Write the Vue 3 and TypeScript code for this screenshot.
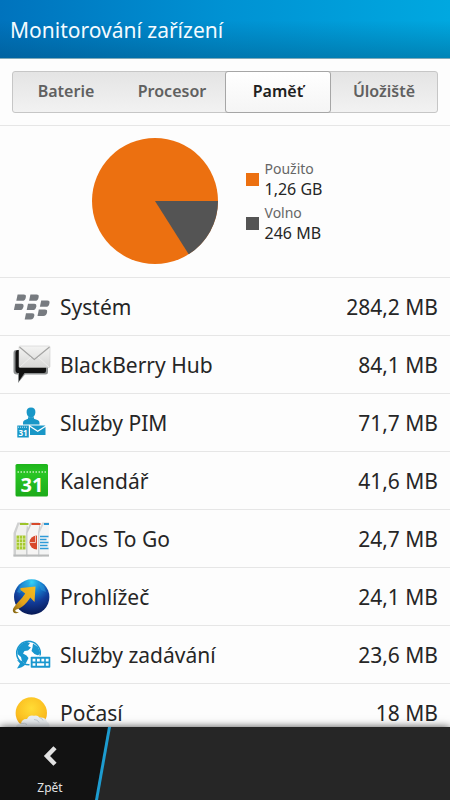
<script setup lang="ts">
import { computed, ref } from 'vue'

interface MemoryItem {
  icon: string
  name: string
  size: string
}

const tabs: string[] = ['Baterie', 'Procesor', 'Paměť', 'Úložiště']
const activeTab = ref<string>('Paměť')

const usedMb = 1290
const freeMb = 246

const items: MemoryItem[] = [
  { icon: 'system', name: 'Systém', size: '284,2 MB' },
  { icon: 'hub', name: 'BlackBerry Hub', size: '84,1 MB' },
  { icon: 'pim', name: 'Služby PIM', size: '71,7 MB' },
  { icon: 'calendar', name: 'Kalendář', size: '41,6 MB' },
  { icon: 'docs', name: 'Docs To Go', size: '24,7 MB' },
  { icon: 'browser', name: 'Prohlížeč', size: '24,1 MB' },
  { icon: 'input', name: 'Služby zadávání', size: '23,6 MB' },
  { icon: 'weather', name: 'Počasí', size: '18 MB' },
]

// Slice of free memory, drawn clockwise from three o'clock.
const freeSlice = computed<string>(() => {
  const angle = (freeMb / (usedMb + freeMb)) * Math.PI * 2
  const x = 63 + 63 * Math.cos(angle)
  const y = 63 + 63 * Math.sin(angle)
  return `M63 63H126A63 63 0 0 1 ${x.toFixed(2)} ${y.toFixed(2)}Z`
})
</script>

<template>
  <div class="screen">
    <header class="title-bar">
      <h1>Monitorování zařízení</h1>
    </header>

    <main class="content">
      <nav class="tab-area">
        <div class="tabs" role="tablist">
          <button
            v-for="tab in tabs"
            :key="tab"
            type="button"
            role="tab"
            class="tab"
            :class="{ active: tab === activeTab }"
            :aria-selected="tab === activeTab"
            @click="activeTab = tab"
          >{{ tab }}</button>
        </div>
      </nav>

      <section class="summary">
        <svg class="pie" viewBox="0 0 126 126" aria-hidden="true">
          <circle cx="63" cy="63" r="63" fill="#ec7010" />
          <path :d="freeSlice" fill="#545454" />
        </svg>
        <dl class="legend">
          <div class="entry used">
            <dt>Použito</dt>
            <dd>1,26 GB</dd>
          </div>
          <div class="entry free">
            <dt>Volno</dt>
            <dd>246 MB</dd>
          </div>
        </dl>
      </section>

      <ul class="list">
        <li v-for="item in items" :key="item.name" class="row">
          <svg class="icon" viewBox="0 0 40 40" aria-hidden="true">
            <g v-if="item.icon === 'system'" fill="#777b80">
              <path d="M5.600 7.500h6.200q2.400 0 2.100 2.400q-.5 3.900-3.800 3.900H4.300z" />
              <path d="M18.400 7.500h6.200q2.400 0 2.100 2.400q-.5 3.900-3.800 3.900H17.100z" />
              <path d="M3.200 16.800h6.200q2.400 0 2.100 2.400q-.5 3.900-3.800 3.900H1.900z" />
              <path d="M16 16.800h6.200q2.400 0 2.100 2.400q-.5 3.900-3.800 3.900H14.700z" />
              <path d="M29.200 13.500h6.200q2.400 0 2.100 2.400q-.5 3.900-3.800 3.900H27.900z" />
              <path d="M26.800 22.600h6.200q2.400 0 2.100 2.400q-.5 3.900-3.800 3.900H25.500z" />
              <path d="M14 26.200h6.200q2.400 0 2.100 2.400q-.5 3.900-3.800 3.900H12.700z" />
            </g>

            <g v-else-if="item.icon === 'hub'">
              <defs>
                <linearGradient id="hubPaper" x1="0" y1="0" x2="0" y2="1">
                  <stop offset="0" stop-color="#f4f4f3" />
                  <stop offset="1" stop-color="#d6d6d5" />
                </linearGradient>
              </defs>
              <path d="M4 5h30q2 0 2 2v20q0 2.500-2.500 2.500H13L6 38V29.500H5q-3.500 0-3.500-3V8q0-3 2.500-3z" fill="#8c8f90" />
              <path d="M6 5h26q2 0 2 2v19q0 2-2 2H12.500L7 36V28H5.500q-2-.5-2-2.500V8q0-3 2.500-3z" fill="#111" />
              <rect x="7" y="1" width="31" height="21.500" rx="1" fill="url(#hubPaper)" stroke="#c6c6c5" stroke-width=".5" />
              <path d="M7.500 2l14.800 12.500L37.500 2" fill="none" stroke="#a3a3a2" stroke-width="1.200" />
              <path d="M8 22l11-10M37 22L26 12" fill="none" stroke="#f3f3f2" stroke-width=".7" />
            </g>

            <g v-else-if="item.icon === 'pim'" fill="#1997c7">
              <path d="M19 4.500c3 0 4.600 1.900 4.400 4.800c-.2 3-1.900 5.500-4.400 5.500s-4.200-2.500-4.400-5.500c-.2-2.900 1.400-4.800 4.400-4.800z" />
              <path d="M16 14.200h6v1.500l4 1.500q1.500.8 1.500 2.500V21.500H11V19.700q0-1.700 1.500-2.500l3.500-1.500z" />
              <path d="M5.300 22.500H16.800V34.500H5.300z" />
              <path d="M6 24.200h10" stroke="#fff" stroke-width=".8" stroke-dasharray="1 1" />
              <text x="11" y="33" text-anchor="middle" class="tiny-date">31</text>
              <path d="M18 22.500H33.500L25.700 27.600z" />
              <path d="M18 24l7.700 5.100L33.500 24V32H18z" />
            </g>

            <g v-else-if="item.icon === 'calendar'">
              <defs>
                <linearGradient id="calGreen" x1="0" y1="0" x2="0" y2="1">
                  <stop offset="0" stop-color="#1db41b" />
                  <stop offset=".3" stop-color="#29c524" />
                  <stop offset="1" stop-color="#1cab1a" />
                </linearGradient>
              </defs>
              <rect x="3.500" y="3" width="32.500" height="32.500" rx="1.500" fill="url(#calGreen)" />
              <path d="M5.500 11h29" stroke="#c4f0bb" stroke-width="1.600" stroke-dasharray="1.500 1.500" />
              <text x="20" y="31" text-anchor="middle" class="big-date">31</text>
            </g>

            <g v-else-if="item.icon === 'docs'">
              <path d="M5.500 3.500H14L17.500 12V37.500H1.500V14z" fill="#cfd0d0" />
              <path d="M4 14L7 5.500h8L14 14V37.500H4z" fill="#f1f1ef" />
              <path d="M8 5h8.500" stroke="#9dc42b" stroke-width="2" />
              <path d="M4.500 16.500h9v14h-9z" fill="#a7c92f" />
              <path d="M4.500 20h9M4.500 23.500h9M4.500 27h9M7.500 16.500v14M10.500 16.500v14" stroke="#e8f1c4" stroke-width=".7" />
              <path d="M18 3.500h9L30 13V37.500H14.500V14z" fill="#c7c9ca" />
              <path d="M15.500 14L19.500 5.500H27.500L26 14V37.500H15.500z" fill="#f6f5f4" />
              <path d="M19.500 5h9" stroke="#d7492a" stroke-width="2" />
              <path d="M25 16.500v14A7.500 7 0 0 1 25 16.500z" fill="#d8482b" />
              <path d="M18 23.500h5.500V17" fill="none" stroke="#f6ded8" stroke-width=".8" />
              <path d="M30 3.500h7V37.500H26.500V14z" fill="#d5d7d8" />
              <path d="M27.500 14L31.500 5.500H37V37.500H27.500z" fill="#f4f5f5" />
              <path d="M32 5h5" stroke="#2996d4" stroke-width="2" />
              <path d="M28 17.500h8.500M28 20.500h6.500M28 23.500h8.500M28 26.500h7.500M28 29.500h8.500" stroke="#2e9bd8" stroke-width="1.700" />
              <path d="M1.500 36.500H37" stroke="#b9bbbb" stroke-width="2" />
            </g>

            <g v-else-if="item.icon === 'browser'">
              <defs>
                <radialGradient id="globeBlue" cx=".5" cy=".08" r=".95">
                  <stop offset="0" stop-color="#35d3f5" />
                  <stop offset=".3" stop-color="#1681d1" />
                  <stop offset=".6" stop-color="#123c99" />
                  <stop offset="1" stop-color="#07164f" />
                </radialGradient>
                <linearGradient id="arrowGold" x1="1" y1="0" x2="0" y2="1">
                  <stop offset="0" stop-color="#f6bd20" />
                  <stop offset=".6" stop-color="#e3a21a" />
                  <stop offset="1" stop-color="#7f6415" />
                </linearGradient>
              </defs>
              <circle cx="19.700" cy="20" r="17.700" fill="url(#globeBlue)" />
              <path d="M8 9q5-5 10-4l-2 4-5 2-3 5-3-1zM26 5l6 4 2 6-5-2z" fill="#2fa0dc" opacity=".45" />
              <path d="M8.500 11L23.500 9.500L22.500 25L18.300 20.500C15 26 10 31 4.500 32.500C2 33.500 3.500 35.500 7 35C3 38 0 35.500 1 32C2.500 28 10 22 13.200 16.500L8.500 13z" fill="url(#arrowGold)" />
            </g>

            <g v-else-if="item.icon === 'input'">
              <circle cx="16.500" cy="18" r="11.800" fill="#fff" stroke="#1997cf" stroke-width="1.500" />
              <path d="M5 25L8 28.500L5 33.500Q10 33 13.500 29.500L10 26z" fill="#1997cf" />
              <path d="M5.500 15Q8 8 14.500 6.700L18 8L16 11L19 12.500L16 15.500L12.500 16L11 18.500L14.500 20.500L16.500 23L13.500 29L10 26.500L9 22L5.500 19z" fill="#1997cf" />
              <path d="M21 8.500L26 12L28.300 18L26 20.500L22.500 19L19.500 16L20.500 12.500z" fill="#1997cf" />
              <rect x="17.500" y="20.500" width="22" height="13" fill="#fff" />
              <rect x="18.700" y="21.800" width="19.600" height="11" rx=".8" fill="#1997cf" />
              <path d="M20.800 25.200h15.800M20.800 29.200h1.600M24.400 29.200h8.600M35 29.200h1.600" stroke="none" />
              <g fill="#fff">
                <path d="M20.600 23.800h2.800v2.600h-2.800zM25 23.800h2.800v2.600H25zM29.400 23.800h2.800v2.600h-2.800zM33.800 23.800h2.800v2.600h-2.800z" />
                <path d="M20.600 28.200h2.800v2.600h-2.800zM25 28.200h7.200v2.600H25zM33.800 28.200h2.800v2.600h-2.800z" />
              </g>
            </g>

            <g v-else>
              <defs>
                <radialGradient id="sunGold" cx=".5" cy=".35" r=".7">
                  <stop offset="0" stop-color="#ffdc35" />
                  <stop offset=".7" stop-color="#fbbd20" />
                  <stop offset="1" stop-color="#f2a41c" />
                </radialGradient>
              </defs>
              <circle cx="19.300" cy="20" r="15.700" fill="url(#sunGold)" />
              <path d="M4 34.500q0-4 5-4q1-5 6-4.500q2-4.500 7-3.200q3.500-1.200 5.500 1.700q7-.5 7.500 4.500q3 1 2.500 5.500z" fill="#e9edf0" />
              <path d="M9 30.500q4-1 6 1M22 26.500q4 0 5 3M27.500 24.500q3 1 3.500 3" fill="none" stroke="#c3cbd2" stroke-width="1" />
            </g>
          </svg>
          <span class="name">{{ item.name }}</span>
          <span class="size">{{ item.size }}</span>
        </li>
      </ul>
    </main>

    <footer class="action-bar">
      <button type="button" class="back">
        <svg class="chevron" viewBox="0 0 14 20" aria-hidden="true">
          <path d="M12 1.800L4 10L12 18.200" fill="none" stroke="#e2e2e2" stroke-width="4.500" />
        </svg>
        <span>Zpět</span>
      </button>
    </footer>
  </div>
</template>

<style>
body {
  margin: 0;
  background: #fff;
}
</style>

<style scoped>
.screen {
  display: flex;
  flex-direction: column;
  height: 100vh;
  overflow: hidden;
  background: #fdfdfd;
  color: #262626;
  font-family: "Noto Sans", "Open Sans", sans-serif;
}

.title-bar {
  display: flex;
  flex: none;
  align-items: center;
  box-sizing: border-box;
  height: 59px;
  padding: 2px 10px 0;
  border-bottom: 1px solid #7fa9b8;
  background:
    linear-gradient(to bottom, rgba(0, 70, 110, 0) 35%, rgba(0, 70, 110, 0.36) 100%),
    linear-gradient(to right, #0073bd, #0092d3 50%, #00a8e0);
}

h1 {
  margin: 0;
  color: #f3fbff;
  font-size: 21px;
  font-weight: 400;
  line-height: 28px;
}

.content {
  flex: 1;
  min-height: 0;
  overflow: hidden;
}

.tab-area {
  padding: 12px;
  border-bottom: 1px solid #e6e6e6;
}

.tabs {
  display: grid;
  grid-template-columns: repeat(4, 1fr);
  box-sizing: border-box;
  height: 42px;
  border: 1px solid #c6c6c6;
  border-radius: 3px;
  background: linear-gradient(#e4e4e4, #f2f2f2);
}

.tab {
  margin: -1px 0;
  padding: 0 0 2px;
  border: 1px solid transparent;
  border-radius: 3px;
  background: none;
  color: #606060;
  font: inherit;
  font-size: 16px;
  font-weight: 600;
}

.tab.active {
  border-color: #a6a6a6;
  background: linear-gradient(#fff, #f5f5f5);
  color: #202020;
}

.summary {
  display: flex;
  align-items: center;
  justify-content: center;
  gap: 28px;
  padding: 12px 36px 13px 0;
  border-bottom: 1px solid #e6e6e6;
}

.pie {
  width: 126px;
  height: 126px;
}

.legend {
  display: grid;
  gap: 4px;
  margin: 0;
}

.entry {
  display: grid;
  grid-template-columns: 13px auto;
  column-gap: 6px;
  align-items: center;
}

.entry::before {
  grid-row: 1 / 3;
  width: 13px;
  height: 13px;
  content: "";
}

.used::before {
  background: #ec7010;
}

.free::before {
  background: #545454;
}

dt {
  color: #666;
  font-size: 14px;
  line-height: 20px;
}

dd {
  margin: 0;
  font-size: 16px;
  line-height: 20px;
}

.list {
  margin: 0;
  padding: 0;
  list-style: none;
}

.row {
  display: flex;
  align-items: center;
  gap: 8px;
  box-sizing: border-box;
  height: 58px;
  padding: 0 12px;
  border-bottom: 1px solid #e6e6e6;
  font-size: 21px;
  line-height: 28px;
}

.icon {
  flex: none;
  width: 40px;
  height: 40px;
}

.tiny-date {
  fill: #fff;
  font-family: "Noto Sans", sans-serif;
  font-size: 8px;
  font-weight: 700;
}

.big-date {
  fill: #fff;
  font-family: "Noto Sans", sans-serif;
  font-size: 20px;
  font-weight: 700;
}

.name {
  flex: 1;
}

.action-bar {
  position: relative;
  flex: none;
  height: 73px;
  background: #262626;
  box-shadow: 0 0 8px rgba(0, 0, 0, 0.7);
}

.action-bar::before,
.action-bar::after {
  position: absolute;
  top: 0;
  left: 0;
  width: 112px;
  height: 100%;
  content: "";
}

.action-bar::before {
  background: #1d9cd0;
  clip-path: polygon(0 0, 111px 0, 98px 100%, 0 100%);
}

.action-bar::after {
  background: #121212;
  clip-path: polygon(0 0, 108px 0, 95px 100%, 0 100%);
}

.back {
  position: relative;
  z-index: 1;
  display: flex;
  flex-direction: column;
  align-items: center;
  gap: 13px;
  width: 100px;
  height: 100%;
  padding: 19px 0 0;
  border: 0;
  background: none;
  color: #e2e2e2;
  font: inherit;
  font-size: 12px;
  line-height: 18px;
}

.chevron {
  width: 14px;
  height: 20px;
}
</style>
